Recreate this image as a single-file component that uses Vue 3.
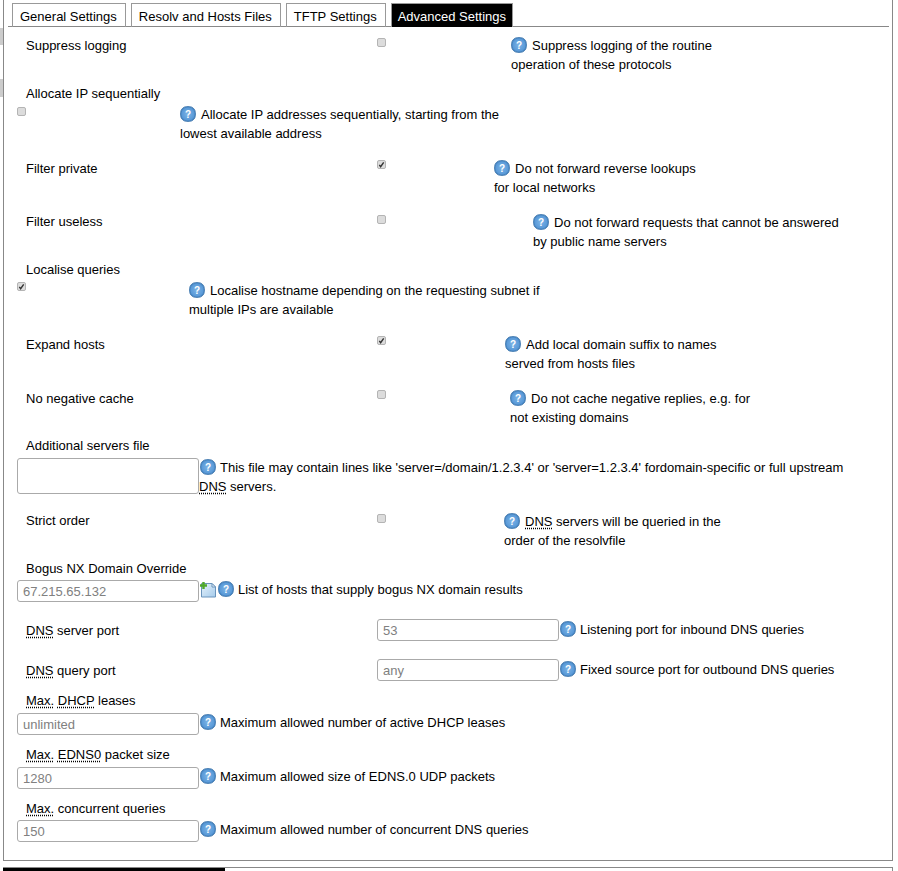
<script setup>
const tabs = [
  { name: "General Settings" },
  { name: "Resolv and Hosts Files" },
  { name: "TFTP Settings" },
  { name: "Advanced Settings", active: true },
];

// square brackets mark the words drawn as abbreviations
// tight: one pixel less above the row, close: one pixel less under the label
// lift: label one pixel higher, high: checkbox one pixel higher
const rows = [
  { label: "Suppress logging", type: "check", inline: true, indent: 125, lines: ["Suppress logging of the routine", "operation of these protocols"] },
  { label: "Allocate IP sequentially", type: "check", indent: 154, lines: ["Allocate IP addresses sequentially, starting from the", "lowest available address"] },
  { label: "Filter private", type: "check", checked: true, inline: true, high: true, indent: 108, lines: ["Do not forward reverse lookups", "for local networks"] },
  { label: "Filter useless", type: "check", inline: true, lift: true, indent: 147, lines: ["Do not forward requests that cannot be answered", "by public name servers"] },
  { label: "Localise queries", type: "check", checked: true, tight: true, high: true, indent: 163, lines: ["Localise hostname depending on the requesting subnet if", "multiple IPs are available"] },
  { label: "Expand hosts", type: "check", checked: true, inline: true, high: true, indent: 119, lines: ["Add local domain suffix to names", "served from hosts files"] },
  { label: "No negative cache", type: "check", inline: true, high: true, indent: 124, lines: ["Do not cache negative replies, e.g. for", "not existing domains"] },
  { label: "Additional servers file", type: "input", tall: true, tight: true, lines: ["This file may contain lines like 'server=/domain/1.2.3.4' or 'server=1.2.3.4' fordomain-specific or full upstream", "[DNS] servers."] },
  { label: "Strict order", type: "check", inline: true, lift: true, indent: 118, lines: ["[DNS] servers will be queried in the", "order of the resolvfile"] },
  { label: "Bogus NX Domain Override", type: "input", tight: true, close: true, placeholder: "67.215.65.132", add: true, lines: ["List of hosts that supply bogus NX domain results"] },
  { label: "[DNS] server port", type: "input", inline: true, tight: true, placeholder: "53", lines: ["Listening port for inbound DNS queries"] },
  { label: "[DNS] query port", type: "input", inline: true, placeholder: "any", lines: ["Fixed source port for outbound DNS queries"] },
  { label: "[Max.] [DHCP] leases", type: "input", placeholder: "unlimited", lines: ["Maximum allowed number of active DHCP leases"] },
  { label: "[Max.] [EDNS0] packet size", type: "input", placeholder: "1280", lines: ["Maximum allowed size of EDNS.0 UDP packets"] },
  { label: "[Max.] concurrent queries", type: "input", close: true, placeholder: "150", lines: ["Maximum allowed number of concurrent DNS queries"] },
];

const parts = (text) =>
  text.split(/(\[[^\]]+\])/).filter(Boolean).map((p) => ({
    abbr: p[0] === "[",
    text: p.replace(/[\[\]]/g, ""),
  }));
</script>

<template>
  <div class="page">
    <span class="sliver sliver-a"></span>
    <span class="sliver sliver-b"></span>

    <div class="panel">
      <ul class="tabs">
        <li v-for="tab in tabs" :key="tab.name" :class="['tab', { active: tab.active }]">{{ tab.name }}</li>
      </ul>

      <div
        v-for="row in rows"
        :key="row.label"
        :class="['row', row.inline ? 'row-inline' : 'row-stack', row.type === 'input' ? 'has-input' : 'has-check', { tight: row.tight, close: row.close, lift: row.lift, high: row.high }]"
      >
        <label class="label">
          <template v-for="(p, i) in parts(row.label)" :key="i">
            <abbr v-if="p.abbr">{{ p.text }}</abbr><template v-else>{{ p.text }}</template>
          </template>
        </label>

        <div class="field">
          <input v-if="row.type === 'check'" class="check" type="checkbox" :checked="row.checked" />
          <input v-else :class="['text', { tall: row.tall }]" type="text" :placeholder="row.placeholder" />

          <svg v-if="row.add" class="add-icon" width="18" height="18" viewBox="0 0 18 18">
            <defs>
              <linearGradient id="pageFill" x1="0" y1="0" x2="1" y2="1">
                <stop offset="0" stop-color="#e6f2fb" />
                <stop offset="1" stop-color="#a5cbeb" />
              </linearGradient>
            </defs>
            <path d="M2.500 3.500h10.500l3.500 3.500v10h-14z" fill="url(#pageFill)" stroke="#6a94bc" />
            <path d="M13 3.500v3.500h3.500z" fill="#f4f9fd" stroke="#6a94bc" />
            <path d="M4.500 2v7M1 5.500h7" stroke="#4fa82a" stroke-width="2.400" />
          </svg>

          <div class="desc" :style="row.indent ? { marginLeft: row.indent + 'px' } : null">
            <template v-for="(line, n) in row.lines" :key="n">
              <svg v-if="n === 0" class="help" width="16" height="16" viewBox="0 0 16 16">
                <defs>
                  <radialGradient id="helpFill" cx="50%" cy="50%" r="60%">
                    <stop offset="0" stop-color="#7db4e6" />
                    <stop offset="0.700" stop-color="#5a9ad8" />
                    <stop offset="1" stop-color="#2f6fae" />
                  </radialGradient>
                </defs>
                <rect x="0.700" y="0.700" width="14.600" height="14.600" rx="6" fill="url(#helpFill)" stroke="#3d76ad" />
                <text x="8" y="11.500" text-anchor="middle" class="help-mark">?</text>
              </svg>
              <template v-for="(p, i) in parts(line)" :key="i">
                <abbr v-if="p.abbr">{{ p.text }}</abbr><template v-else>{{ p.text }}</template>
              </template>
              <br v-if="n < row.lines.length - 1" />
            </template>
          </div>
        </div>
      </div>
    </div>

    <div class="next-panel">
      <div class="next-title"></div>
    </div>
  </div>
</template>

<style>
html,
body {
  margin: 0;
  background: #fff;
  overflow: hidden;
}
</style>

<style scoped>
.page {
  position: relative;
  width: 898px;
  height: 871px;
  overflow: hidden;
  font-family: "Liberation Sans", Arial, sans-serif;
  font-size: 13px;
  line-height: 19px;
  color: #000;
}

.sliver {
  position: absolute;
  left: 0;
  width: 3px;
  background: #ccc;
}
.sliver-a {
  top: 28px;
  height: 17px;
}
.sliver-b {
  top: 79px;
  height: 18px;
}

.panel {
  box-sizing: border-box;
  width: 890px;
  height: 861px;
  margin-left: 3px;
  border: 1px solid #888;
  border-top: 0;
}

.tabs {
  display: flex;
  gap: 5px;
  box-sizing: border-box;
  width: 881px;
  height: 27px;
  margin: 0 0 0 4px;
  padding: 3px 0 0 4px;
  list-style: none;
  border-bottom: 1px solid #888;
}
.tab {
  box-sizing: border-box;
  height: 24px;
  padding: 3px 8px 0 7px;
  border: 1px solid #999;
  border-bottom: 0;
  white-space: nowrap;
}
.tab.active {
  padding: 3px 6px 0;
  background: #000;
  color: #fff;
}

.row {
  padding-left: 13px;
}
.row-inline {
  display: flex;
  margin-top: 16px;
}
.row-stack {
  margin-top: 10px;
}
.row:first-of-type {
  margin-top: 9px;
}
.row-inline.has-input {
  align-items: center;
  margin-top: 18px;
}
.row.tight {
  margin-top: 15px;
}
.row-stack.tight {
  margin-top: 9px;
}
.row-inline.has-input.tight {
  margin-top: 17px;
}

.label {
  display: block;
  margin-left: 9px;
}
.row-inline .label {
  flex: 0 0 351px;
}
.row-inline.lift .label {
  margin-top: -1px;
}
.row-stack.has-check .label {
  margin-bottom: 2px;
}
.row-stack.has-input .label {
  margin-bottom: 3px;
}
.row-stack.close .label {
  margin-bottom: 2px;
}

abbr {
  text-decoration: underline dotted;
  text-underline-offset: 2px;
}

.field {
  display: flex;
  align-items: flex-start;
  min-width: 0;
}

.check {
  appearance: none;
  flex: none;
  box-sizing: border-box;
  width: 9px;
  height: 9px;
  margin: 2px 0 0;
  border: 1px solid #b4b4b4;
  border-radius: 2px;
  background: #dcdcdc;
}
.row.high .check {
  margin-top: 1px;
}
.check:checked {
  background: #dcdcdc url("data:image/svg+xml,%3Csvg xmlns='http://www.w3.org/2000/svg' viewBox='0 0 7 8'%3E%3Cpath d='M1 4.500l1.500 2L6 1.500' fill='none' stroke='%23333' stroke-width='1.600'/%3E%3C/svg%3E") center / 7px 7px no-repeat;
}

.text {
  flex: none;
  box-sizing: border-box;
  width: 182px;
  height: 22px;
  margin: 0;
  padding: 0 5px;
  border: 1px solid #aaa;
  border-radius: 3px;
  font: inherit;
  background: #fff;
}
.text.tall {
  height: 36px;
}
.text::placeholder {
  color: #808080;
  opacity: 1;
}

.add-icon {
  flex: none;
}

.desc {
  white-space: nowrap;
}
.row-inline.has-input .desc {
  margin-top: 1px;
}
.help {
  vertical-align: -3px;
  margin-right: 5px;
}
.has-input .help {
  margin-left: 1px;
  margin-right: 4px;
}
.help-mark {
  font-family: "Liberation Sans", Arial, sans-serif;
  font-size: 10px;
  font-weight: 700;
  fill: #fff;
}

.next-panel {
  box-sizing: border-box;
  width: 890px;
  height: 4px;
  margin: 6px 0 0 3px;
  border: 1px solid #888;
  border-bottom: 0;
}
.next-title {
  width: 222px;
  height: 3px;
  margin-left: -1px;
  background: #000;
}
</style>
